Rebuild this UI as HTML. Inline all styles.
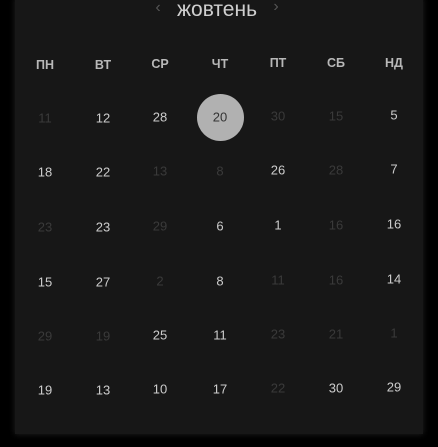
<!DOCTYPE html><html><head><style>
body{margin:0;width:438px;height:447px;background:#000;overflow:hidden;font-family:"Liberation Sans",sans-serif}
.p{position:absolute;left:15px;top:-2px;width:408px;height:436px;background:#171717;box-shadow:0 0 6px #222}
.t{position:absolute;transform:translate(-50%,-50%);white-space:nowrap}
.h{font-size:12.5px;font-weight:bold;color:#b8b8b8}
.n{font-size:13px;color:#cccccc}
.d{color:#3a3a3a}
</style></head><body><div class="p"></div>
<div class="t" style="left:217px;top:10px;font-size:21px;color:#cfcfcf">жовтень</div>
<div class="t" style="left:158px;top:8px;font-size:16px;color:#555">‹</div>
<div class="t" style="left:276px;top:7px;font-size:16px;color:#555">›</div>
<div style="position:absolute;left:197px;top:94px;width:47px;height:47px;border-radius:50%;background:#b1b1b1"></div>
<div id="g"></div>
<script>
var xs=[45,103,160,220,278,336,394],ys=[65,118,172,227,282,336,390];
var heads=["ПН","ВТ","СР","ЧТ","ПТ","СБ","НД"];
var rows=[["11d","12","28","20c","30d","15d","5"],["18","22","13d","8d","26","28d","7"],["23d","23","29d","6","1","16d","16"],["15","27","2d","8","11d","16d","14"],["29d","19d","25","11","23d","21d","1d"],["19","13","10","17","22d","30","29"]];
var h="";
heads.forEach(function(t,i){h+='<div class="t h" style="left:'+xs[i]+'px;top:'+(ys[0]-i*0.4)+'px">'+t+'</div>'});
rows.forEach(function(r,j){r.forEach(function(v,i){var c="t n",s="";if(v.slice(-1)=="d"){c+=" d";v=v.slice(0,-1)}else if(v.slice(-1)=="c"){v=v.slice(0,-1);s="color:#333;"}
h+='<div class="'+c+'" style="'+s+'left:'+xs[i]+'px;top:'+(ys[j+1]-i*0.5)+'px">'+v+'</div>'})});
document.getElementById("g").innerHTML=h;
</script></body></html>
